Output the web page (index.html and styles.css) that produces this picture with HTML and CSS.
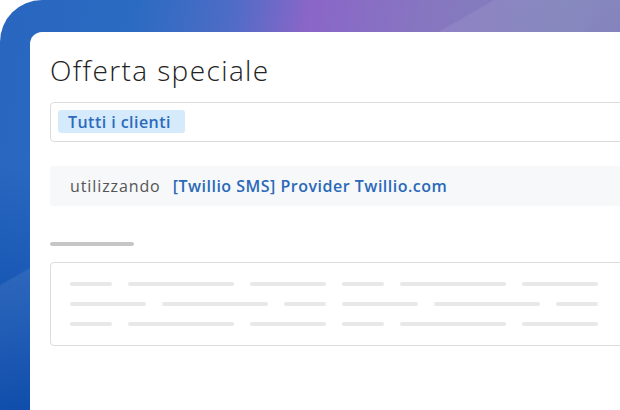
FILE: index.html
```html
<!DOCTYPE html>
<html lang="it">
<head>
<meta charset="utf-8">
<link rel="stylesheet" href="styles.css">
</head>
<body>
<div class="frame">
  <div class="card">
    <h1 class="title">Offerta speciale</h1>
    <div class="field">
      <span class="tag">Tutti i clienti</span>
    </div>
    <div class="using">
      <span class="using-label">utilizzando</span>
      <span class="using-link">[Twillio SMS] Provider Twillio.com</span>
    </div>
    <div class="label-bar"></div>
    <div class="textbox">
      <div class="line">
        <span class="seg w42"></span><span class="seg w106"></span><span class="seg w76"></span><span class="seg w42"></span><span class="seg w106"></span><span class="seg w76"></span>
      </div>
      <div class="line">
        <span class="seg w76"></span><span class="seg w106"></span><span class="seg w42"></span><span class="seg w76"></span><span class="seg w106"></span><span class="seg w42"></span>
      </div>
      <div class="line">
        <span class="seg w42"></span><span class="seg w106"></span><span class="seg w76"></span><span class="seg w42"></span><span class="seg w106"></span><span class="seg w76"></span>
      </div>
    </div>
  </div>
</div>
</body>
</html>
```
FILE: styles.css
```css
html, body {
  margin: 0;
  padding: 0;
  background: #ffffff;
  overflow: hidden;
}
body {
  width: 620px;
  height: 410px;
  font-family: "Open Sans", "Liberation Sans", sans-serif;
}
.frame {
  height: 410px;
  box-sizing: border-box;
  padding: 32px 0 0 30px;
  border-top-left-radius: 42px;
  overflow: hidden;
  background:
    linear-gradient(150deg, rgba(255,255,255,0) 0%, rgba(255,255,255,0) 37%, rgba(255,255,255,0.08) 37.3%, rgba(255,255,255,0.02) 60%),
    linear-gradient(to bottom, rgba(10,72,168,0) 0%, rgba(10,72,168,0) 40%, rgba(6,70,168,0.95) 100%),
    linear-gradient(100deg, #2866bf 0%, #2c6bc2 20%, #4f6cc6 34%, #8a66c8 45%, #8676c0 62%, #7f82ba 82%, #7f78ba 100%);
}
.card {
  background: #ffffff;
  width: 640px;
  height: 400px;
  box-sizing: border-box;
  border-top-left-radius: 12px;
  padding: 20px 0 0 20px;
}
.title {
  margin: 0;
  font-size: 28px;
  line-height: 36px;
  font-weight: 300;
  color: #222222;
  letter-spacing: 1.4px;
}
.field {
  margin-top: 14px;
  height: 40px;
  box-sizing: border-box;
  border: 1px solid #dcdcdc;
  border-radius: 4px;
  padding: 7px;
  display: flex;
  align-items: flex-start;
}
.tag {
  display: inline-flex;
  align-items: center;
  height: 23px;
  padding: 0 14px 0 10px;
  border-radius: 3px;
  background: #d5ebfb;
  color: #2b6abd;
  font-size: 16px;
  font-weight: 600;
  letter-spacing: 0.45px;
}
.using {
  margin-top: 24px;
  height: 40px;
  background: #f6f8fa;
  border-radius: 3px;
  display: flex;
  align-items: center;
  padding-left: 20px;
  font-size: 16px;
  gap: 12px;
}
.using-label {
  color: #555555;
  letter-spacing: 0.9px;
}
.using-link {
  color: #2a69b7;
  font-weight: 600;
  letter-spacing: 0.5px;
}
.label-bar {
  margin-top: 36px;
  width: 84px;
  height: 4px;
  border-radius: 2px;
  background: #c6c6c6;
}
.textbox {
  margin-top: 16px;
  height: 84px;
  box-sizing: border-box;
  border: 1px solid #dcdcdc;
  border-radius: 4px;
  padding: 19px 0 0 19px;
  display: flex;
  flex-direction: column;
  gap: 16px;
}
.line {
  display: flex;
  gap: 16px;
}
.seg {
  display: block;
  height: 4px;
  border-radius: 2px;
  background: #e8e8e8;
}
.w42 { width: 42px; }
.w76 { width: 76px; }
.w106 { width: 106px; }
```
